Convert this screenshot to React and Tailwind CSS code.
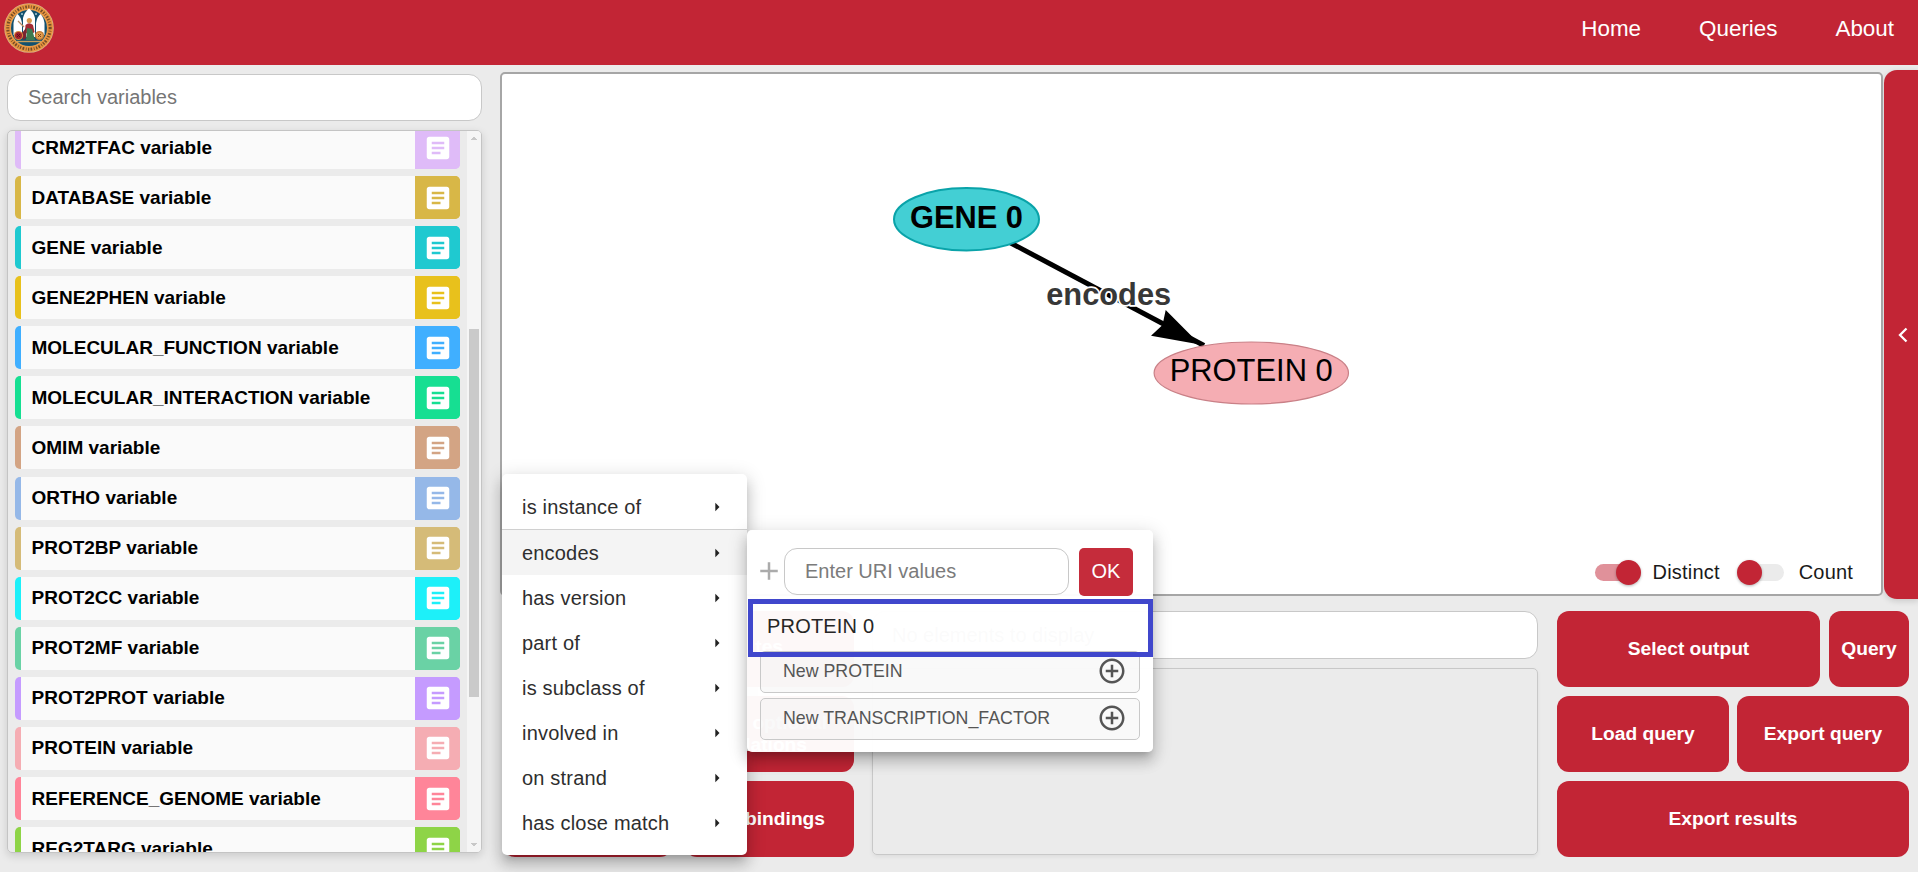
import React from "react";
import { MdArticle, MdArrowRight, MdAdd, MdAddCircleOutline } from "react-icons/md";

const VARIABLES = [
  ["CRM2TFAC", "bg-[#dfbbf8]"],
  ["DATABASE", "bg-[#d8b747]"],
  ["GENE", "bg-[#1fc9d0]"],
  ["GENE2PHEN", "bg-[#e8c11c]"],
  ["MOLECULAR_FUNCTION", "bg-[#40afff]"],
  ["MOLECULAR_INTERACTION", "bg-[#16df92]"],
  ["OMIM", "bg-[#d3a484]"],
  ["ORTHO", "bg-[#95b8e8]"],
  ["PROT2BP", "bg-[#d5bb78]"],
  ["PROT2CC", "bg-[#1df0f9]"],
  ["PROT2MF", "bg-[#6ad2a5]"],
  ["PROT2PROT", "bg-[#c59bff]"],
  ["PROTEIN", "bg-[#f5adb3]"],
  ["REFERENCE_GENOME", "bg-[#ff8599]"],
  ["REG2TARG", "bg-[#8ed447]"],
];

const RELATIONS = [
  "encodes",
  "has version",
  "part of",
  "is subclass of",
  "involved in",
  "on strand",
  "has close match",
];

function Crest() {
  return (
    <svg className="block" width="50" height="50" viewBox="0 0 50 50">
      <circle cx="25" cy="25" r="24.8" fill="#d9b183" />
      <circle cx="25" cy="25" r="24" fill="#e8943f" />
      <circle cx="25" cy="25" r="21.2" fill="none" stroke="#4d3620" strokeWidth="3" strokeDasharray="1.3 1.5 0.8 1.6 1.7 1.3" opacity="0.75" />
      <circle cx="25" cy="25" r="18.8" fill="#e9a558" />
      <circle cx="25" cy="25" r="18" fill="#12506f" />
      <path d="M9.500 32V20q1-6 4-9 3.500 3 4.500 9v12z" fill="#fff" />
      <path d="M19 34V15q1.500-6 6-9.500 4.500 3.500 6 9.500v19z" fill="#fff" />
      <path d="M32 32V20q1-6 4.500-9 3 3 4 9v12z" fill="#fff" />
      <circle cx="18" cy="11" r="1.100" fill="#9cc3d0" />
      <circle cx="32" cy="11" r="1.100" fill="#9cc3d0" />
      <path d="M14 18l6 6" stroke="#b78b62" strokeWidth="1.300" />
      <circle cx="25.300" cy="17.500" r="2.600" fill="#d99a4e" />
      <path d="M21.500 22q3.500-3.500 7.500 0l1.500 7-5 4-4.500-4z" fill="#a32c35" />
      <path d="M23 25l5 1 3 11h-9z" fill="#3c7a50" />
      <path d="M18 30l4-5v10l-3 2z" fill="#7a2430" />
      <circle cx="14.500" cy="32.500" r="4.600" fill="#d58b3c" />
      <circle cx="14.500" cy="32.500" r="3.500" fill="#a3202c" />
      <path d="M13 31l3 3M16 31l-3 3" stroke="#5a1018" strokeWidth="0.900" />
      <circle cx="35.500" cy="32.500" r="4.600" fill="#c47a33" />
      <circle cx="35.500" cy="32.500" r="3.200" fill="#e0a050" />
      <path d="M34 31l3 3M37 31l-3 3" stroke="#7a3a18" strokeWidth="0.900" />
      <path d="M13 38.500h24" stroke="#c9a05c" strokeWidth="1.400" />
    </svg>
  );
}

function VariableRow({ name, color }) {
  return (
    <div className={"flex h-[43px] shrink-0 items-stretch overflow-hidden rounded-[5px] pl-[6px] " + color}>
      <div className="flex flex-1 items-center bg-[#fafafa] pl-[10.500px] text-[19px] leading-none font-bold text-black">
        <span className="-mt-px">{name} variable</span>
      </div>
      <div className={"flex w-[45px] items-center justify-center text-white " + color}>
        <MdArticle size={30} />
      </div>
    </div>
  );
}

function Sidebar() {
  return (
    <aside className="flex w-[475px] shrink-0 flex-col">
      <div className="flex h-[47px] shrink-0 items-center rounded-[13px] border border-[#c8c8c8] bg-white pl-5 text-[20px] text-[#757575]">
        <span className="-mt-[2px]">Search variables</span>
      </div>
      <div className="mt-[9px] flex h-[723px] overflow-hidden rounded-[5px] border border-[#c4c4c4] shadow-[0_3px_8px_rgba(0,0,0,0.14)]">
        <div className="-mt-[5px] flex flex-1 flex-col gap-[7.080px] pr-[7px] pl-[7px]">
          {VARIABLES.map(([name, color]) => (
            <VariableRow key={name} name={name} color={color} />
          ))}
        </div>
        <div className="flex w-[14px] flex-col items-center bg-[#f5f5f5]">
          <svg className="mt-[6px] block" width="6" height="3" viewBox="0 0 6 3" shapeRendering="crispEdges"><path d="M2 0h2v1h1v1h1v1H0V2h1V1h1z" fill="#c8c8c8" /></svg>
          <div className="mt-[189px] h-[368px] w-[10px] bg-[#cacaca]" />
          <svg className="mt-[146px] block" width="6" height="3" viewBox="0 0 6 3" shapeRendering="crispEdges"><path d="M0 0h6v1H5v1H4v1H2V2H1V1H0z" fill="#c8c8c8" /></svg>
        </div>
      </div>
    </aside>
  );
}

function Graph() {
  return (
    <svg className="absolute inset-0" width="1379" height="520" viewBox="502 74 1379 520" fontFamily="'Liberation Sans', Arial, sans-serif">
      <line x1="1008" y1="241.500" x2="1204" y2="345.500" stroke="#000" strokeWidth="5" />
      <path d="M1200 344.500L1165.700 310L1162.500 325L1151 335.700Z" fill="#000" />
      <text x="1108.700" y="304.900" textAnchor="middle" fontSize="30.800" fontWeight="700" fill="#373737" stroke="#fff" strokeWidth="3.500" paintOrder="stroke" strokeLinejoin="round">encodes</text>
      <ellipse cx="966.500" cy="219.300" rx="72.500" ry="31.200" fill="#43cfd4" stroke="#0aa3a9" strokeWidth="2" />
      <text x="966.500" y="227.900" textAnchor="middle" fontSize="30.800" fontWeight="700" fill="#000">GENE 0</text>
      <ellipse cx="1251.300" cy="373" rx="97.200" ry="31" fill="#f5adb3" stroke="#c98087" strokeWidth="1.200" />
      <text x="1251.200" y="381" textAnchor="middle" fontSize="30.900" fill="#000">PROTEIN 0</text>
    </svg>
  );
}

function Toggle({ on, label }) {
  return (
    <div className="flex items-center">
      <div
        className={
          "flex h-[17px] items-center rounded-full " +
          (on ? "w-[43px] justify-end bg-[#e0919a]" : "w-[43px] justify-start bg-[#ebebeb]")
        }
      >
        <div className={"size-[25px] shrink-0 rounded-full bg-[#c22535] shadow-[0_1px_3px_rgba(0,0,0,0.3)] " + (on ? "-mr-[3px]" : "-ml-[4px]")} />
      </div>
      <span className="ml-[15px] text-[20px] leading-none tracking-[0.00938em] text-[#1a1a1a]">{label}</span>
    </div>
  );
}

function Button({ className = "", children }) {
  return (
    <div className={"flex h-[76px] items-center rounded-[12px] bg-[#c22535] text-center text-[19.2px] leading-[22px] font-bold text-white " + (className.includes("justify-") ? "" : "justify-center ") + className}>
      {children}
    </div>
  );
}

function RelationItem({ label, active }) {
  return (
    <div className={"flex h-[45px] shrink-0 items-center justify-between px-5 " + (active ? "bg-[#f4f4f4]" : "")}>
      <span>{label}</span>
      <MdArrowRight size={20} className="text-[#222]" />
    </div>
  );
}

function RelationMenu() {
  return (
    <div className="absolute top-[474px] left-[502px] flex h-[381px] w-[245px] flex-col rounded-[5px] bg-white pt-[10px] text-[20px] leading-none tracking-[0.00938em] text-[#2e2e2e] shadow-[0_6px_7px_-4px_rgba(0,0,0,0.2),0_10px_13px_1px_rgba(0,0,0,0.14),0_4px_18px_3px_rgba(0,0,0,0.12)]">
      <RelationItem label="is instance of" />
      <div className="h-px shrink-0 bg-[#d0d0d0]" />
      {RELATIONS.map((r) => (
        <RelationItem key={r} label={r} active={r === "encodes"} />
      ))}
    </div>
  );
}

function NewNode({ label }) {
  return (
    <div className="flex h-[42px] items-center justify-between rounded-[5px] border border-[#c9c9c9] bg-[rgba(240,240,240,0.4)] pr-[12px] pl-[22px] text-[17.8px] text-[#555]">
      <span className="-mt-[2px]">{label}</span>
      <MdAddCircleOutline size={30} className="-mt-[2px]" />
    </div>
  );
}

function TargetMenu() {
  return (
    <div className="absolute top-[530px] left-[747px] h-[222px] w-[406px] rounded-[5px] bg-white/97 shadow-[0_6px_7px_-4px_rgba(0,0,0,0.2),0_10px_13px_1px_rgba(0,0,0,0.14),0_4px_18px_3px_rgba(0,0,0,0.12)]">
      <div className="flex pt-[18px] pl-[7px]">
        <MdAdd size={30} className="mt-[8px] text-[#ababab]" />
        <div className="flex h-[47px] w-[285px] items-center rounded-[13px] border border-[#c8c8c8] bg-white pl-5 text-[20px] text-[#7b7b7b]">
          <span className="-mt-[2px]">Enter URI values</span>
        </div>
        <div className="ml-[10px] flex h-[48px] w-[54px] items-center justify-center rounded-[5px] bg-[#c52c3b] text-[20px] text-white">
          <span className="-mt-[3px]">OK</span>
        </div>
      </div>
      <div className="mt-[55px] flex flex-col gap-[5px] pr-[13px] pl-[13px]">
        <NewNode label="New PROTEIN" />
        <NewNode label="New TRANSCRIPTION_FACTOR" />
      </div>
      <div className="absolute top-[69px] left-px flex h-[58px] w-[405px] items-center border-5 border-[#4047cc] pl-[14px] text-[20px] tracking-[0.00938em] text-[#262626]">
        <span className="-mt-[4px]">PROTEIN 0</span>
      </div>
    </div>
  );
}

export default function App() {
  return (
    <div className="relative flex h-[872px] w-[1918px] flex-col overflow-hidden bg-[#ebebeb] font-['Liberation_Sans',Arial,sans-serif]">
      <header className="flex h-[65px] shrink-0 items-start justify-between bg-[#c22535] pt-[3px] pr-[24px] pl-[4px]">
        <Crest />
        <nav className="flex gap-[58px] pt-[12px] text-[22.4px] leading-[28px] text-white">
          <span>Home</span>
          <span>Queries</span>
          <span>About</span>
        </nav>
      </header>

      <div className="flex flex-1 pt-[9px] pl-[7px]">
        <Sidebar />

        <div className="ml-[18px] flex flex-1 flex-col">
          <div className="-mt-[4px] flex">
            <div className="relative mt-[2px] flex h-[524px] w-[1383px] items-end justify-end rounded-[5px] border-2 border-[#a6a6a6] bg-white">
              <Graph />
              <div className="relative mb-[11px] flex h-[22px] items-center gap-[21px] pr-[28px]">
                <Toggle on label="Distinct" />
                <Toggle label="Count" />
              </div>
            </div>
            <div className="ml-px flex h-[529px] w-[35px] items-center rounded-l-[13px] bg-[#c22535] pl-[14px] shadow-[0_2px_6px_rgba(0,0,0,0.15)]">
              <svg width="10" height="16" viewBox="0 0 10 16"><path d="M8.500 1.500L2 8l6.500 6.500" fill="none" stroke="#fff" strokeWidth="2.300" /></svg>
            </div>
          </div>

          <div className="mt-[12px] flex">
            <div className="ml-[3px] grid w-[351px] grid-cols-2 content-start gap-x-[13px] gap-y-[9px]">
              <Button />
              <Button className="justify-end pr-[71px]">
                <span className="-mt-[5px]">tes</span>
              </Button>
              <Button />
              <Button className="justify-end pr-[27px]">
                <span className="flex flex-col items-end">
                  <span>optional</span>
                  <span className="pr-[20px]">relations</span>
                </span>
              </Button>
              <Button />
              <Button className="justify-end pr-[29px]">bindings</Button>
            </div>
            <div className="ml-[18px] flex w-[666px] flex-col">
              <div className="flex h-[48px] items-center rounded-[13px] border border-[#c8c8c8] bg-white pl-[19px] text-[20px] text-[#757575]">
                No elements to display
              </div>
              <div className="mt-[9px] h-[187px] rounded-[5px] border border-[#c8c8c8] shadow-[0_2px_4px_rgba(0,0,0,0.06)]" />
            </div>
            <div className="ml-[19px] flex w-[352px] flex-col gap-[9px]">
              <div className="flex gap-[9px]">
                <Button className="w-[263px]">Select output</Button>
                <Button className="w-[80px]">Query</Button>
              </div>
              <div className="flex gap-[8px]">
                <Button className="w-[172px]">Load query</Button>
                <Button className="w-[172px]">Export query</Button>
              </div>
              <Button>Export results</Button>
            </div>
          </div>
        </div>
      </div>

      <RelationMenu />
      <TargetMenu />
    </div>
  );
}
